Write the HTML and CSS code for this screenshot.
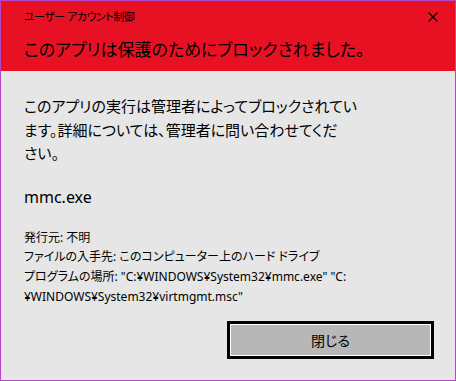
FILE: index.html
```html
<!DOCTYPE html>
<html lang="ja">
<head>
  <meta charset="UTF-8">
  <title>ユーザー アカウント制御</title>
  <link rel="stylesheet" href="styles.css">
</head>
<body>

  <div class="dialog">
    <header class="dialog-head">
      <div class="title-row">
        <span class="title">ユーザー アカウント制御</span>
        <svg class="close" width="10" height="10" viewBox="0 0 10 10">
          <path d="M0.5 0.5 L9.5 9.5 M9.5 0.5 L0.5 9.5" stroke="#000" stroke-width="1.1" fill="none"/>
        </svg>
      </div>
      <h1 class="headline">このアプリは保護のためにブロックされました。</h1>
    </header>

    <main class="dialog-body">
      <p class="message">このアプリの実行は管理者によってブロックされてい<br>ます。詳細については、管理者に問い合わせてくだ<br>さい。</p>

      <p class="app-name">mmc.exe</p>

      <div class="details">
        <div>発行元: 不明</div>
        <div>ファイルの入手先: このコンピューター上のハード ドライブ</div>
        <div>プログラムの場所: "C:¥WINDOWS¥System32¥mmc.exe" "C:<br>¥WINDOWS¥System32¥virtmgmt.msc"</div>
      </div>

      <div class="actions">
        <button class="btn-close">閉じる</button>
      </div>
    </main>
  </div>

</body>
</html>
```

FILE: styles.css
```css
html, body {
  margin: 0;
  padding: 0;
}

body {
  width: 456px;
  height: 381px;
  font-family: "Noto Sans", "Noto Sans CJK JP", sans-serif;
  color: #000;
}

.dialog {
  box-sizing: border-box;
  width: 456px;
  height: 381px;
  border: 1px solid #b446c8;
  background: #e6e6e6;
  display: flex;
  flex-direction: column;
}

.dialog-head {
  background: #e81123;
  height: 70px;
  box-sizing: border-box;
  padding: 8px 17px 0 23px;
}

.title-row {
  display: flex;
  justify-content: space-between;
  align-items: center;
  height: 16px;
}

.title {
  font-size: 11px;
  line-height: 16px;
  letter-spacing: -0.5px;
  font-feature-settings: "palt";
}

.close {
  display: block;
}

.headline {
  margin: 12px 0 0;
  font-size: 17px;
  font-weight: normal;
  line-height: 26px;
  font-feature-settings: "palt";
}

.dialog-body {
  flex: 1;
  padding: 24px 0 0 23px;
  display: flex;
  flex-direction: column;
}

.message {
  margin: 0;
  font-size: 15px;
  line-height: 23.5px;
  font-feature-settings: "palt";
}

.app-name {
  margin: 20px 0 0;
  font-size: 16px;
  line-height: 22px;
}

.details {
  margin-top: 20px;
  font-size: 12px;
  line-height: 19.7px;
  font-feature-settings: "palt";
}

.actions {
  display: flex;
  justify-content: flex-end;
  margin-top: auto;
  padding: 0 21px 21px 0;
}

.btn-close {
  box-sizing: border-box;
  width: 207px;
  height: 38px;
  border: 3px solid #000;
  box-shadow: inset 0 0 0 1px #fff;
  background: #b7b7b7;
  font-family: inherit;
  font-size: 14px;
  font-feature-settings: "palt";
  color: #000;
  padding: 0;
}
```
